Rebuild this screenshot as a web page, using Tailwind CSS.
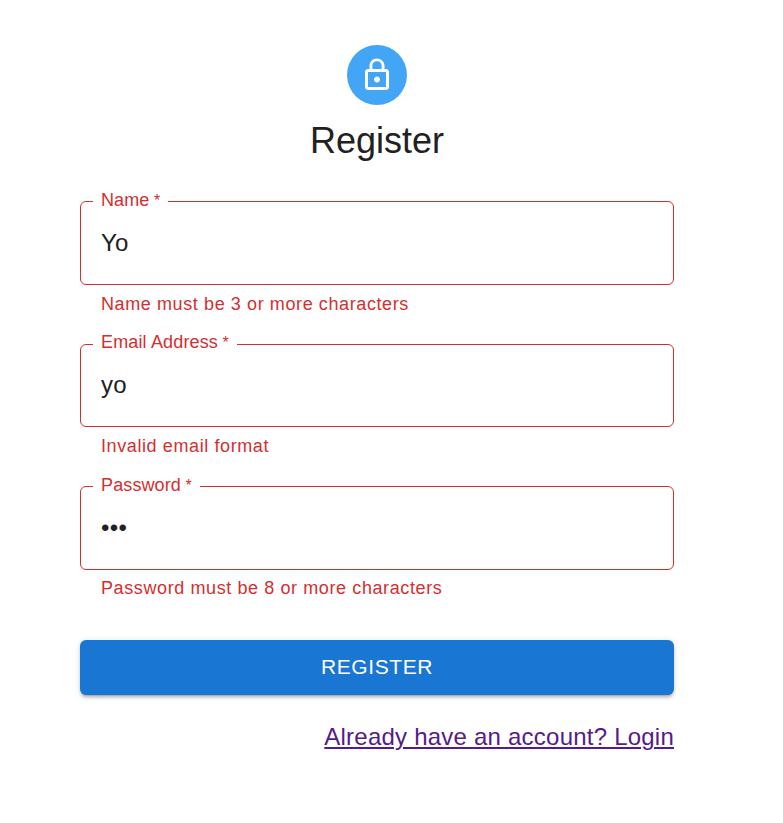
<!DOCTYPE html>
<html lang="en"><head><meta charset="utf-8"><title>Register</title>
<script src="https://cdn.jsdelivr.net/npm/@tailwindcss/browser@4"></script></head>
<body class="bg-white font-['Liberation_Sans',Arial,sans-serif] text-[#212121]">
<main class="ml-20 w-[594px] pt-[45px] flex flex-col items-center">
<div class="size-[60px] rounded-full bg-[#42a5f5] flex items-center justify-center">
<svg class="size-9" viewBox="0 0 24 24" fill="white"><path d="M12 17c1.1 0 2-.9 2-2s-.9-2-2-2-2 .9-2 2 .9 2 2 2zm6-9h-1V6c0-2.76-2.24-5-5-5S7 3.24 7 6v2H6c-1.1 0-2 .9-2 2v10c0 1.1.9 2 2 2h12c1.1 0 2-.9 2-2V10c0-1.1-.9-2-2-2zM8.900 6c0-1.710 1.390-3.100 3.100-3.100s3.100 1.390 3.100 3.100v2H8.900V6zM18 20H6V10h12v10z"/></svg>
</div>
<h1 class="mt-3 text-[36px] leading-[48px]">Register</h1>
<form class="w-full mt-6 flex flex-col">
<div class="h-[142px]">
<fieldset class="h-24 border border-[#d32f2f] rounded-[6px] pl-3"><legend class="w-[75px] pl-2 pb-[2px] text-[18px] leading-[22px] tracking-[0.12px] text-[#d32f2f] whitespace-nowrap">Name<span class="text-[16px]"> *</span></legend><div class="pl-2 pt-[12px] text-[24px] leading-[34px] tracking-[0.2px]">Yo</div></fieldset>
<p class="mt-[5px] pl-[21px] text-[18px] leading-[28px] tracking-[0.6px] text-[#d32f2f]">Name must be 3 or more characters</p>
</div>
<div class="h-[143px]">
<fieldset class="h-24 border border-[#d32f2f] rounded-[6px] pl-3"><legend class="w-[144px] pl-2 pb-1 text-[18px] leading-[22px] tracking-[0.15px] text-[#d32f2f] whitespace-nowrap">Email Address<span class="text-[16px]"> *</span></legend><div class="pl-2 pt-[10px] text-[24px] leading-[34px] tracking-[0.2px]">yo</div></fieldset>
<p class="mt-[5px] pl-[21px] text-[18px] leading-[28px] tracking-[0.6px] text-[#d32f2f]">Invalid email format</p>
</div>
<div class="h-[142px]">
<fieldset class="h-24 border border-[#d32f2f] rounded-[6px] pl-3"><legend class="w-[107px] pl-2 pb-[2px] text-[18px] leading-[22px] tracking-[0.12px] text-[#d32f2f] whitespace-nowrap">Password<span class="text-[16px]"> *</span></legend><div class="pl-2 pt-[12px] text-[24px] leading-[34px] tracking-[0.3px]">•••</div></fieldset>
<p class="mt-[4px] pl-[21px] text-[18px] leading-[28px] tracking-[0.6px] text-[#d32f2f]">Password must be 8 or more characters</p>
</div>
<button type="submit" class="mt-6 h-[55px] w-full rounded-[6px] bg-[#1976d2] text-white text-[21px] leading-[36px] tracking-[0.6px] pb-[2px] shadow-[0_4px_2px_-3px_rgba(0,0,0,0.2),0_3px_3px_0_rgba(0,0,0,0.14),0_1px_7px_0_rgba(0,0,0,0.12)]">REGISTER</button>
<a href="#" class="self-end mt-6 text-[24px] leading-[36px] tracking-[0.225px] text-[#551a8b] underline decoration-2 underline-offset-2">Already have an account? Login</a>
</form>
</main></body></html>
